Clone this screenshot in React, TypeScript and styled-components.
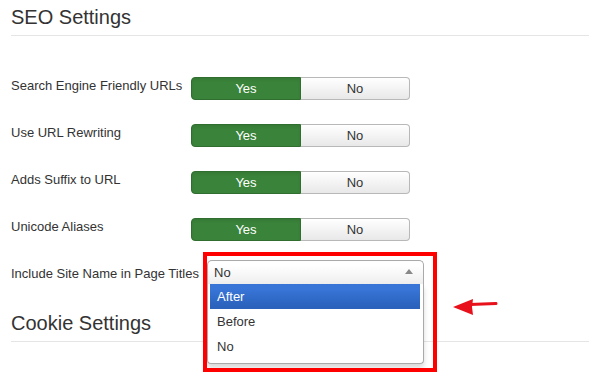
import React from 'react'
import styled, { createGlobalStyle } from 'styled-components'

const GlobalStyle = createGlobalStyle`
  html, body {
    margin: 0;
    padding: 0;
    background: #fff;
  }
  body {
    font-family: "Liberation Sans", Arial, Helvetica, sans-serif;
    font-size: 13px;
    color: #333;
  }
`

const Page = styled.div`
  padding: 5px 0 0 11px;
  width: 589px;
  min-height: 378px;
  box-sizing: border-box;
`

const SectionTitle = styled.h2<{ $gap: number }>`
  margin: 0 0 ${({ $gap }) => $gap}px;
  padding-bottom: 6px;
  font-size: 20px;
  line-height: 24px;
  font-weight: normal;
  color: #333;
  border-bottom: 1px solid #e5e5e5;
`

const ControlGroup = styled.div<{ $gap: number }>`
  display: flex;
  align-items: flex-start;
  margin-bottom: ${({ $gap }) => $gap}px;
`

const ControlLabel = styled.label<{ $padTop?: number }>`
  width: 180px;
  flex: 0 0 180px;
  line-height: 18px;
  white-space: nowrap;
  padding-top: ${({ $padTop }) => $padTop ?? 0}px;
`

const Controls = styled.div<{ $offset?: number }>`
  margin-left: ${({ $offset }) => $offset ?? 0}px;
`

const BtnGroup = styled.div`
  display: flex;
  width: 219px;
  height: 23px;
`

const ToggleBtn = styled.button<{ $active: boolean; $side: 'left' | 'right' }>`
  flex: 1;
  height: 23px;
  margin: 0;
  padding: 0;
  font-family: inherit;
  font-size: 13px;
  line-height: 21px;
  cursor: pointer;
  border-radius: ${({ $side }) => ($side === 'left' ? '4px 0 0 4px' : '0 4px 4px 0')};
  ${({ $active }) =>
    $active
      ? `
    color: #fff;
    background: #3a833a;
    border: 1px solid #2f6e2f;
    box-shadow: inset 0 2px 3px rgba(0,0,0,0.08);
  `
      : `
    color: #333;
    background: linear-gradient(#ffffff, #e8e8e8);
    border: 1px solid #b8b8b8;
    border-left: none;
  `}
`

const SelectWrap = styled.div`
  position: relative;
  width: 217px;
`

const SelectHead = styled.div`
  height: 24px;
  box-sizing: border-box;
  display: flex;
  align-items: center;
  justify-content: space-between;
  padding: 0 10px 0 6px;
  border: 1px solid #aaa;
  border-bottom: none;
  border-radius: 5px 5px 0 0;
  background: linear-gradient(#fff 20%, #eee 100%);
  line-height: 22px;
`

const Caret = styled.span`
  width: 0;
  height: 0;
  border-left: 4px solid transparent;
  border-right: 4px solid transparent;
  border-bottom: 5px solid #888;
  margin-top: -2px;
`

const Drop = styled.ul`
  position: absolute;
  left: 0;
  right: 0;
  top: 24px;
  margin: 0;
  list-style: none;
  padding: 0 3px 4px 2px;
  background: #fff;
  border: 1px solid #aaa;
  border-top: none;
  border-radius: 0 0 4px 4px;
  box-shadow: 0 4px 5px rgba(0, 0, 0, 0.15);
  z-index: 2;
`

const Option = styled.li<{ $highlighted?: boolean }>`
  height: 25px;
  line-height: 25px;
  padding: 0 7px;
  ${({ $highlighted }) =>
    $highlighted &&
    `
    color: #fff;
    background: linear-gradient(#3875d7 20%, #2a62bc 90%);
  `}
`

const Callout = styled.div`
  position: absolute;
  left: -4px;
  top: -8px;
  width: 234px;
  height: 120px;
  box-sizing: border-box;
  border: 4px solid #f00;
  z-index: 3;
  pointer-events: none;
`

const Pointer = styled.svg`
  position: absolute;
  left: 237px;
  top: 36px;
  z-index: 3;
`

type ToggleRowProps = {
  label: string
}

const ToggleRow = ({ label }: ToggleRowProps) => (
  <ControlGroup $gap={24}>
    <ControlLabel>{label}</ControlLabel>
    <Controls>
      <BtnGroup>
        <ToggleBtn $active $side="left">Yes</ToggleBtn>
        <ToggleBtn $active={false} $side="right">No</ToggleBtn>
      </BtnGroup>
    </Controls>
  </ControlGroup>
)

const toggles = [
  'Search Engine Friendly URLs',
  'Use URL Rewriting',
  'Adds Suffix to URL',
  'Unicode Aliases',
]

const options = ['After', 'Before', 'No']

export default function App() {
  return (
    <>
      <GlobalStyle />
      <Page>
        <SectionTitle $gap={41}>SEO Settings</SectionTitle>
        {toggles.map(t => (
          <ToggleRow key={t} label={t} />
        ))}
        <ControlGroup $gap={27} style={{ marginTop: -5 }}>
          <ControlLabel $padTop={5}>Include Site Name in Page Titles</ControlLabel>
          <Controls $offset={16}>
            <SelectWrap>
              <SelectHead>
                <span>No</span>
                <Caret />
              </SelectHead>
              <Drop>
                {options.map((o, i) => (
                  <Option key={o} $highlighted={i === 0}>
                    {o}
                  </Option>
                ))}
              </Drop>
              <Callout />
              <Pointer width="56" height="20" viewBox="0 0 56 20">
                <path d="M26 8.5 L52 7.5" stroke="#e8101a" strokeWidth="3" strokeLinecap="round" fill="none" />
                <path d="M9 11 L29 3 L28 11 L29 19 Z" fill="#e8101a" />
              </Pointer>
            </SelectWrap>
          </Controls>
        </ControlGroup>
        <SectionTitle $gap={0}>Cookie Settings</SectionTitle>
      </Page>
    </>
  )
}
